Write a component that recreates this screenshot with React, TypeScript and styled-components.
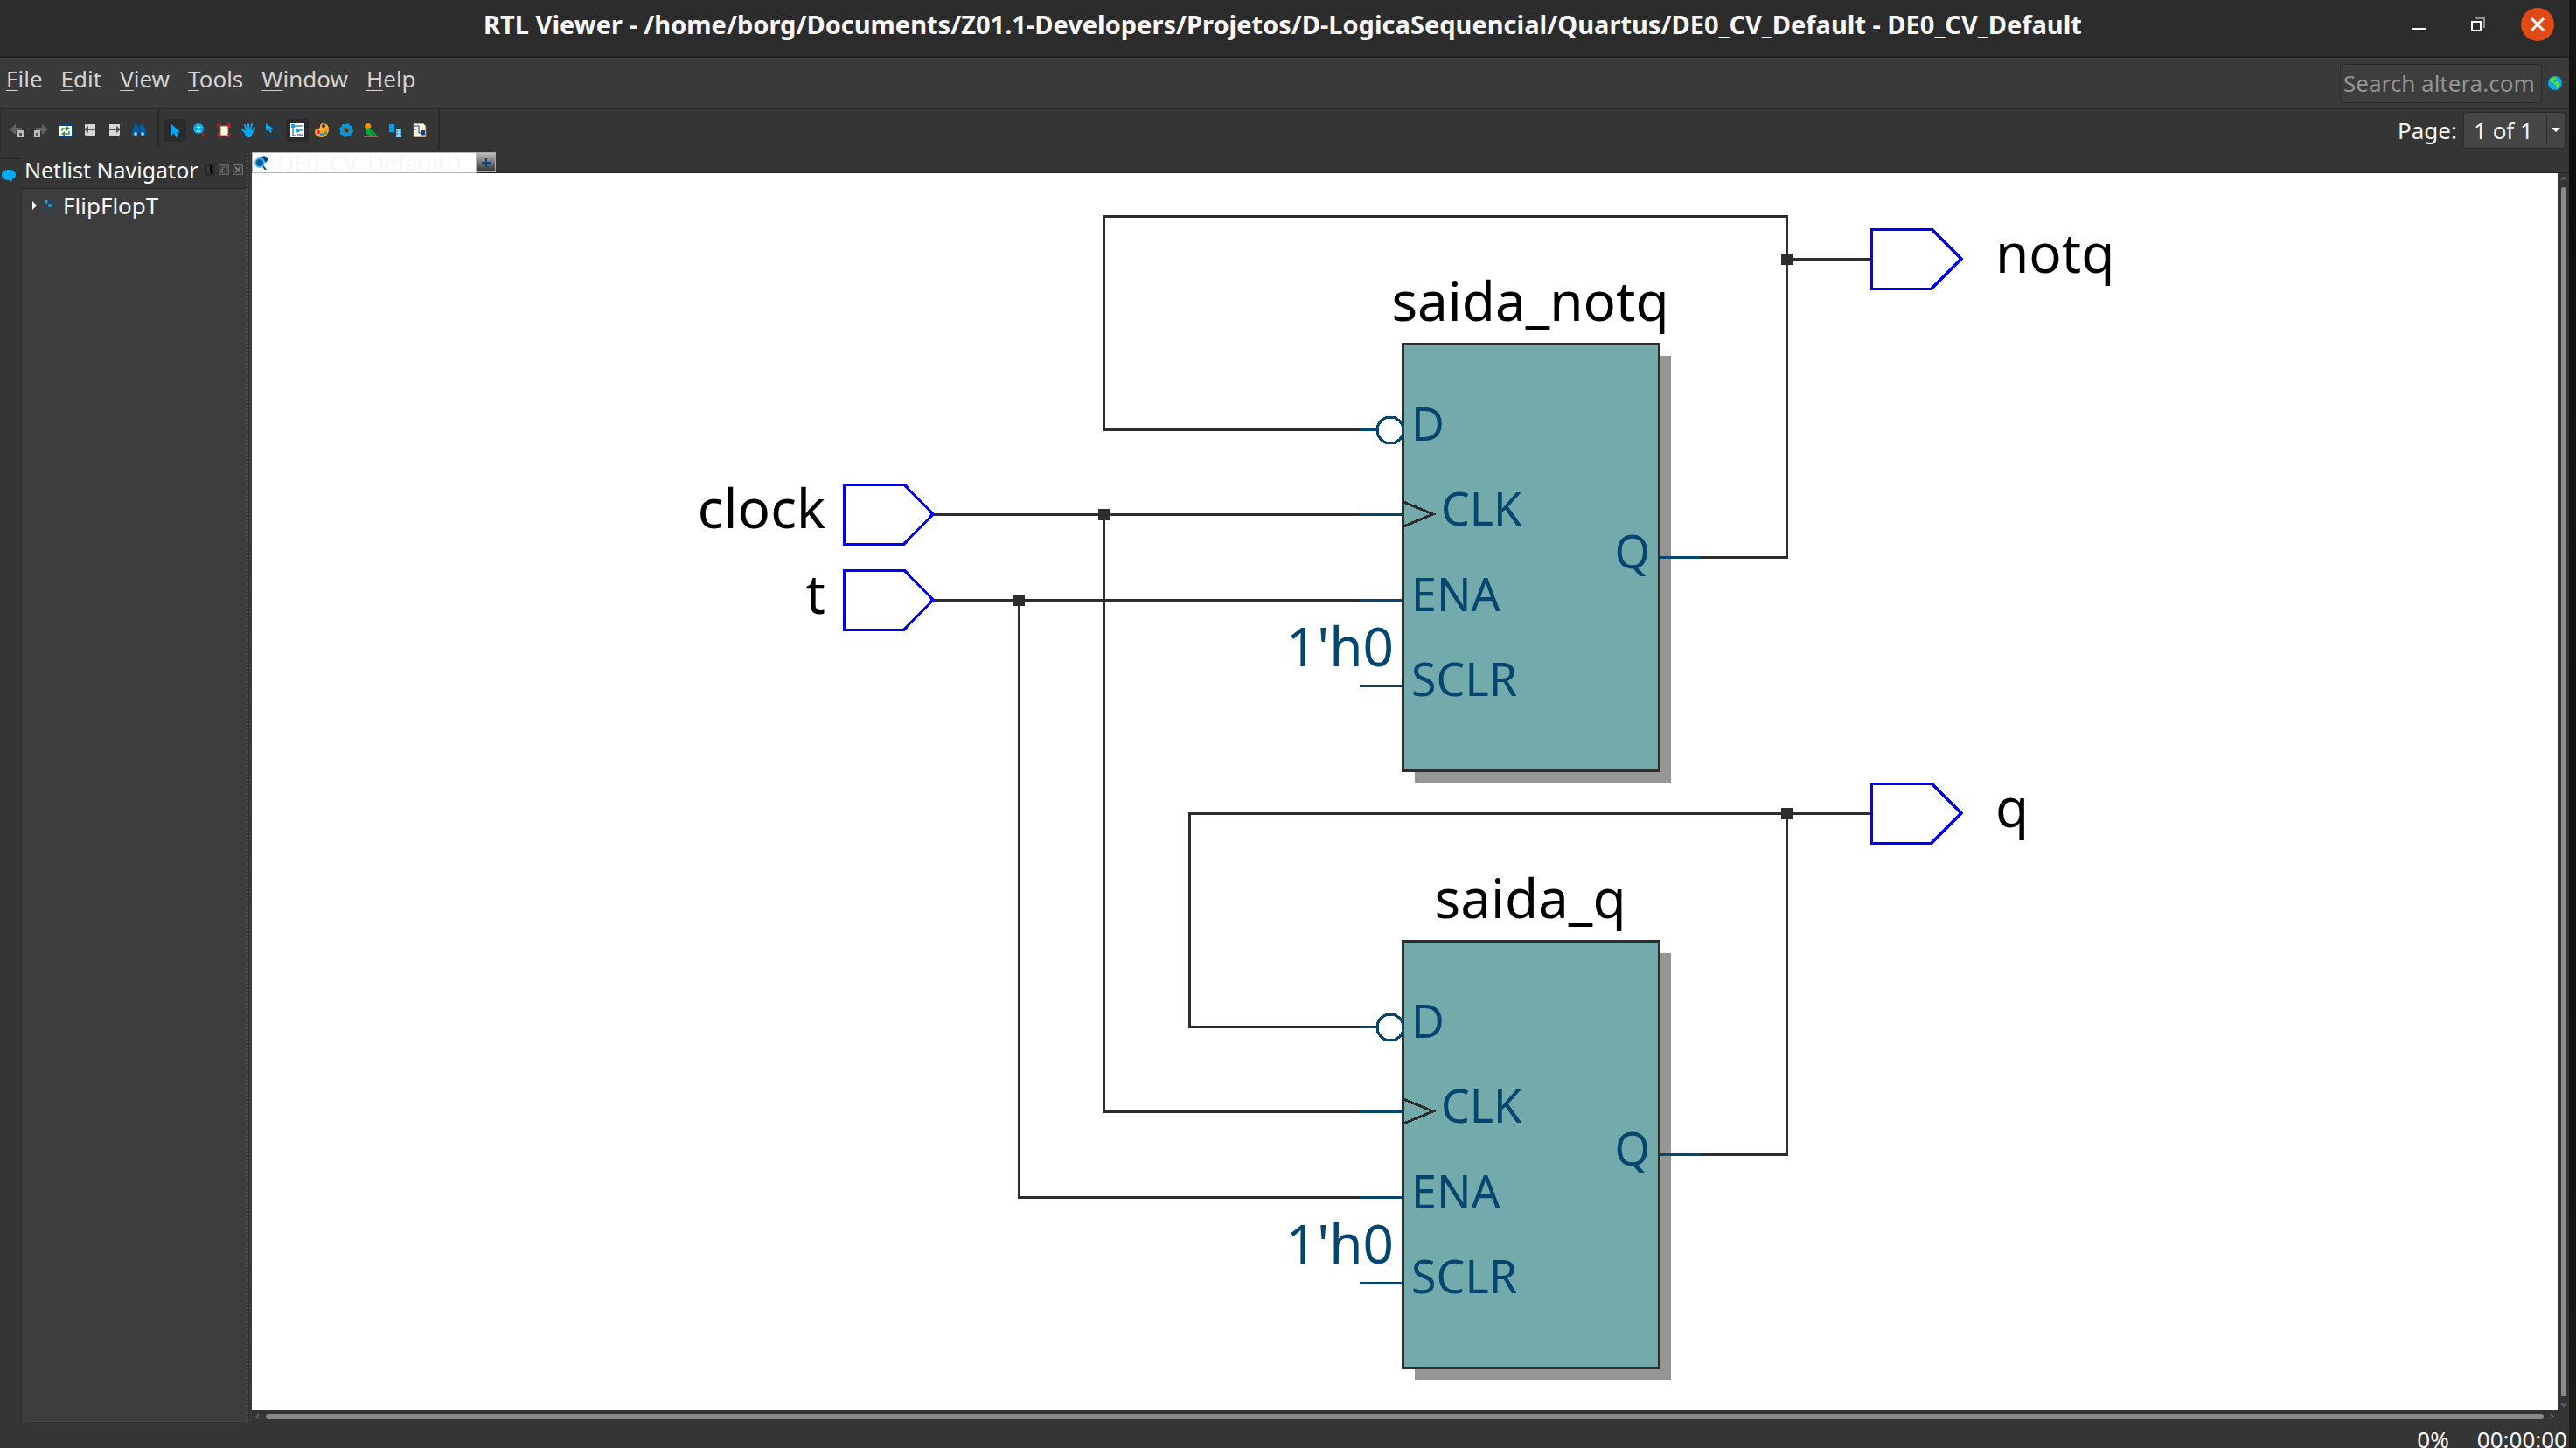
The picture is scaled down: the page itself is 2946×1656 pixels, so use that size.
import React from "react";
import styled, { createGlobalStyle } from "styled-components";

const font = `"Noto Sans", "Open Sans", sans-serif`;
const color = {
  title: "#2c2c2c",
  menu: "#3a3a3a",
  bar: "#353535",
  panel: "#3d3d3d",
  line: "#2a2a2a",
  text: "#f7f7f7",
  soft: "#d2d2d2",
  wire: "#2d2d2d",
  pin: "#04466f",
  port: "#0000ff",
  block: "#73abad",
  shadow: "#969696",
  sky: "#03a9f4",
  navy: "#00468b",
};

const GlobalStyle = createGlobalStyle`
  *, *::before, *::after { box-sizing: border-box; }
  body { margin: 0; background: #111; font: 26px/36px ${font}; color: ${color.text}; }
  button, input, select { font: inherit; color: inherit; }
`;

const Desktop = styled.div`
  display: grid;
  grid-template-columns: minmax(0, 1fr) 8px;
  height: 100vh;
  overflow: hidden;
`;
const DesktopEdge = styled.div`
  background: linear-gradient(#161616, #0d0d0d 12%, #141414 30%, #10120f 55%, #121212 80%, #1c1d19);
`;
const AppWindow = styled.div`
  display: flex;
  flex-direction: column;
  min-width: 0;
  height: 100vh;
  background: ${color.bar};
`;

/* Title bar */
const TitleBar = styled.header`
  display: grid;
  grid-template-columns: 196px 1fr 200px;
  align-items: center;
  flex: none;
  height: 66px;
  padding-bottom: 8px;
  background: ${color.title};
  border-bottom: 2px solid #232323;
`;
const Title = styled.h1`
  margin: 0;
  font-size: 29px;
  line-height: 36px;
  font-weight: 700;
  text-align: center;
  white-space: nowrap;
`;
const WindowButtons = styled.div`
  display: flex;
  justify-content: flex-end;
  gap: 30px;
  padding-right: 17px;
`;
const WindowButton = styled.button<{ $close?: boolean }>`
  display: grid;
  place-items: center;
  flex: none;
  width: 38px;
  height: 38px;
  padding: 0;
  border: 0;
  border-radius: 50%;
  background: ${(p) => (p.$close ? "#df4a16" : "transparent")};
`;

/* Menu bar */
const MenuBar = styled.div`
  display: flex;
  align-items: center;
  justify-content: space-between;
  flex: none;
  height: 59px;
  background: ${color.menu};
  border-bottom: 1px solid ${color.line};
`;
const Menus = styled.nav`
  display: flex;
  gap: 21px;
  padding: 0 0 10px 7px;
`;
const MenuButton = styled.button`
  padding: 0;
  border: 0;
  background: none;
  color: ${color.soft};
  line-height: 36px;
`;
const Mnemonic = styled.span`
  text-decoration: underline;
  text-decoration-thickness: 1px;
  text-underline-offset: 3px;
`;
const SearchForm = styled.form`
  display: flex;
  align-items: center;
  gap: 7px;
  padding-right: 8px;
`;
const SearchInput = styled.input`
  width: 231px;
  height: 45px;
  padding: 0 0 0 3px;
  border: 1px solid ${color.line};
  border-radius: 4px;
  background: ${color.panel};
  &::placeholder { color: #949494; opacity: 1; }
`;
const PlainButton = styled.button`
  display: grid;
  place-items: center;
  padding: 0;
  border: 0;
  background: none;
`;

/* Toolbar */
const ToolBar = styled.div`
  display: flex;
  align-items: center;
  justify-content: space-between;
  flex: none;
  height: 49px;
  padding-bottom: 2px;
  border-left: 1px solid #2b2b2b;
`;
const Tools = styled.div`
  display: flex;
  align-items: center;
`;
const ToolGroup = styled.div`
  display: flex;
  gap: 2px;
  padding: 0 8px 0 5px;
`;
const ToolDivider = styled.span`
  width: 2px;
  height: 45px;
  background: #2b2b2b;
`;
const ToolButton = styled.button<{ $active?: boolean }>`
  display: grid;
  place-items: center;
  width: 26px;
  height: 26px;
  padding: 0;
  border: 0;
  border-radius: 3px;
  background: ${(p) => (p.$active ? "#2a2a2a" : "transparent")};
`;
const Pager = styled.label`
  display: flex;
  align-items: center;
  gap: 7px;
  padding-right: 4px;
`;
const SelectFrame = styled.span`
  display: grid;
  grid-template-columns: 1fr 21px;
  align-items: center;
  width: 117px;
  height: 42px;
  border: 1px solid #2b2b2b;
  border-radius: 4px;
  background: #454545;
`;
const PageSelect = styled.select`
  grid-area: 1 / 1 / 2 / 3;
  height: 40px;
  padding: 0 0 0 11px;
  border: 0;
  background: none;
  appearance: none;
`;
const SelectArrow = styled.span`
  display: grid;
  place-items: center;
  grid-area: 1 / 2 / 2 / 3;
  height: 33px;
  border-left: 1px solid #2b2b2b;
  pointer-events: none;
`;

/* Work area */
const Work = styled.div`
  display: grid;
  grid-template-columns: 24px 258px 6px minmax(0, 1fr);
  flex: 1;
  min-height: 0;
`;
const DockStrip = styled.div`
  padding-top: 5px;
`;
const DockTab = styled.button`
  display: grid;
  place-items: center;
  width: 24px;
  height: 38px;
  padding: 0 4px 0 0;
  border: 0;
  border-top: 3px solid #2b2b2b;
  background: none;
`;
const Dock = styled.aside`
  display: flex;
  flex-direction: column;
  min-width: 0;
`;
const DockHeader = styled.div`
  display: flex;
  align-items: center;
  justify-content: space-between;
  height: 41px;
  padding: 0 4px 2px 4px;
`;
const DockTitle = styled.h2`
  margin: 0;
  font-size: 25px;
  line-height: 36px;
  font-weight: 400;
  white-space: nowrap;
`;
const DockButtons = styled.div`
  display: flex;
  align-items: center;
  gap: 4px;
`;
const DockButton = styled.button<{ $active?: boolean }>`
  display: grid;
  place-items: center;
  width: 12px;
  height: 14px;
  padding: 0;
  border: 0;
  border-radius: 3px;
  background: ${(p) => (p.$active ? "#2a2a2a" : "transparent")};
`;
const Tree = styled.ul`
  flex: 1;
  margin: 0;
  padding: 1px 0 0;
  list-style: none;
  background: ${color.panel};
  border: 1px solid;
  border-color: #262626 #454545 #474747 #2b2b2b;
`;
const TreeItem = styled.li`
  display: flex;
  align-items: center;
  gap: 8px;
  padding-left: 12px;
`;
const Splitter = styled.div`
  margin-bottom: 1px;
  background: radial-gradient(circle, #4d4d4d 1px, transparent 1px) 0 0 / 3px 4px;
`;
const Viewer = styled.main`
  display: grid;
  grid-template-columns: minmax(0, 1fr) 13px;
  grid-template-rows: 24px minmax(0, 1fr) 13px;
  min-width: 0;
`;
const Tabs = styled.div`
  display: flex;
  grid-column: 1 / 3;
  border-bottom: 1px solid #232323;
`;
const Tab = styled.button`
  display: flex;
  align-items: center;
  gap: 10px;
  width: 257px;
  height: 24px;
  padding: 0 2px;
  border: 1px solid #b4b4b4;
  background: #fff;
  color: #f6f6f6;
  line-height: 22px;
  white-space: nowrap;
`;
const AddTab = styled.button`
  display: grid;
  place-items: center;
  width: 22px;
  height: 23px;
  padding: 0;
  border: 1px solid #a8a8a8;
  background: linear-gradient(#bcbcbc, #333);
`;
const Canvas = styled.div`
  display: grid;
  place-items: center;
  overflow: hidden;
  background: #fff;
`;
const ScrollBar = styled.div<{ $vertical?: boolean }>`
  display: flex;
  flex-direction: ${(p) => (p.$vertical ? "column" : "row")};
  align-items: center;
  justify-content: space-between;
  gap: 6px;
  padding: ${(p) => (p.$vertical ? "3px 0" : "0 3px")};
`;
const Thumb = styled.div`
  flex: 1;
  align-self: center;
  min-width: 6px;
  min-height: 6px;
  border-radius: 3px;
  background: #8b8989;
`;

/* Status bar */
const StatusBar = styled.footer`
  display: flex;
  justify-content: flex-end;
  gap: 32px;
  flex: none;
  height: 30px;
  padding-right: 2px;
  line-height: 40px;
`;

/* Schematic */
const Drawing = styled.svg`
  display: block;
  font-family: ${font};
  fill: none;
`;
const Wire = styled.path`
  stroke: ${color.wire};
  stroke-width: 3;
`;
const Stub = styled.path`
  stroke: ${color.pin};
  stroke-width: 3;
`;
const PortShape = styled.path`
  stroke: ${color.port};
  stroke-width: 3;
`;
const NetLabel = styled.text<{ $pin?: boolean }>`
  fill: ${(p) => (p.$pin ? color.pin : "#000")};
  font-size: 62px;
`;
const PinLabel = styled.text`
  fill: ${color.pin};
  font-size: 52px;
`;

const Icon = ({ children, size = 16 }: { children: React.ReactNode; size?: number }) => (
  <svg width={size} height={size} viewBox="0 0 16 16" fill="none" aria-hidden="true">
    {children}
  </svg>
);

const HierarchyLines = ({ line }: { line: string }) => (
  <>
    <path d="M3 5v9h3M5 3h10M10 8h5M8 13h7" stroke={line} />
    <path d="M1 1h4v4H1zM6 6h4v4H6z" fill={color.sky} />
  </>
);

const toolGroups: { label: string; active?: boolean; art: React.ReactNode }[][] = [
  [
    {
      label: "Back",
      art: (
        <>
          <path d="M0 7 7 1v4h7v4H7v4z" fill="#626262" />
          <path d="M9 8h7v8H9z" fill="#bcbcbc" />
          <path d="M11 11h3v3h-3z" fill="#555" />
        </>
      ),
    },
    {
      label: "Forward",
      art: (
        <>
          <path d="M16 7 9 1v4H2v4h7v4z" fill="#626262" />
          <path d="M0 8h7v8H0z" fill="#bcbcbc" />
          <path d="M2 11h3v3H2z" fill="#555" />
        </>
      ),
    },
    {
      label: "Refresh",
      art: (
        <>
          <path d="M0 0h16v16H0z" fill={color.navy} />
          <path d="M1 3h14v12H1z" fill="#fff" />
          <path d="M4 9V6h6M12 9v3H6" stroke="#3f9142" strokeWidth="1.5" />
          <path d="m9 3 4 3-4 3zM7 9l-4 3 4 3z" fill="#3f9142" />
        </>
      ),
    },
    {
      label: "Previous page",
      art: (
        <>
          <path d="M2 1h12v14H4l-2-2z" fill="#d6d6d6" />
          <path d="m1 7 5-4v3h9v2H6v3z" fill="#555" />
        </>
      ),
    },
    {
      label: "Next page",
      art: (
        <>
          <path d="M2 1h12v12l-2 2H2z" fill="#d6d6d6" />
          <path d="m15 7-5-4v3H1v2h9v3z" fill="#555" />
        </>
      ),
    },
    {
      label: "Find",
      art: (
        <>
          <path d="M3 1h3l1 3h2l1-3h3l3 9v4l-2 1h-4l-1-5H7l-1 5H2l-2-1v-4z" fill="#005a9e" />
          <circle cx="4" cy="12" r="2" fill="#7fc8ee" />
          <circle cx="12" cy="12" r="2" fill="#7fc8ee" />
        </>
      ),
    },
  ],
  [
    { label: "Select", active: true, art: <path d="M4 1v13l3-3 2 5 3-1-2-5h4z" fill={color.sky} /> },
    {
      label: "Zoom",
      art: (
        <>
          <path d="m11 11 4 5" stroke="#b71c1c" strokeWidth="2" />
          <circle cx="7" cy="6" r="6" fill={color.sky} />
          <path d="M7 2v5M4.500 4.500h5M4.500 9h5" stroke="#fff" />
        </>
      ),
    },
    {
      label: "Fit in window",
      art: (
        <>
          <path d="M4 3h9v11H4z" fill="#fff6dc" stroke="#8a6b62" />
          <path d="M1 5V1h4M11 1h4v4M15 11v4h-4M5 15H1v-4M1 1l3 3M15 1l-3 3M15 15l-3-3M1 15l3-3" stroke="#f11c1c" />
        </>
      ),
    },
    {
      label: "Pan",
      art: (
        <>
          <path d="M4 8h9l-1 6-2 2H7l-3-3z" fill={color.sky} />
          <path d="M5 11 1 7M6 9 4 2M8 9V1M10 9l2-8M12 11l3-6" stroke={color.sky} strokeWidth="2" strokeLinecap="round" />
        </>
      ),
    },
    {
      label: "Area select",
      art: (
        <>
          <path d="M0 0v9l3-2 2 4 2-1-2-4h3z" fill={color.sky} />
          <path d="M8 4h7v11H2v-4" stroke="#005a9e" strokeDasharray="1 1" />
        </>
      ),
    },
    {
      label: "Netlist navigator",
      active: true,
      art: (
        <>
          <path d="M0 0h16v16H0z" fill="#fff" />
          <HierarchyLines line={color.navy} />
        </>
      ),
    },
    {
      label: "Colors",
      art: (
        <>
          <path d="M9 0c5 0 7 3 7 7s-3 9-8 9-8-3-8-6 2-4 4-4 2-2 2-3 1-3 3-3z" fill="#ffa726" />
          <circle cx="10" cy="3" r="2" fill="#353535" />
          <circle cx="4" cy="10" r="2" fill="#e91e63" />
          <circle cx="8" cy="13" r="2" fill="#039be5" />
          <circle cx="12" cy="11" r="2" fill="#43a047" />
          <circle cx="13" cy="7" r="1" fill="#ab47bc" />
        </>
      ),
    },
    {
      label: "Settings",
      art: (
        <>
          <circle cx="8" cy="8" r="5" stroke="#039be5" strokeWidth="4" />
          <circle cx="8" cy="8" r="7" stroke="#039be5" strokeWidth="2" strokeDasharray="3 2.500" />
          <circle cx="8" cy="8" r="3" stroke="#8a6d3b" />
        </>
      ),
    },
    {
      label: "Bird's eye view",
      art: (
        <>
          <path d="M0 14h16v2H0z" fill="#8d6e63" />
          <path d="M2 5c3-1 5 0 7 2l6 7H7c-4-1-6-4-5-9z" fill="#00a83a" />
          <path d="M1 4c0-3 2-4 4-4s4 2 3 5L3 6z" fill="#fb8c00" />
          <path d="m6 8 7 6" stroke="#1b5e20" />
        </>
      ),
    },
    {
      label: "Swap view",
      art: (
        <>
          <path d="M1 1h6v9H1z" fill="#03a0e8" />
          <path d="M9 6h6v10H9z" fill="#81d0f5" />
          <path d="m9 1 4 3M2 12l5 3" stroke={color.navy} />
          <path d="M9 9h2M9 12h2M13 9h2M13 12h2" stroke="#2b6c96" />
        </>
      ),
    },
    {
      label: "Export schematic",
      art: (
        <>
          <path d="M1 0h11l3 3v13H1z" fill="#fff6dc" stroke="#8a6b62" />
          <path d="M1 3h6v8h4M1 7h3M9 14h5" stroke={color.navy} />
          <path d="M10 8h4v5h-4z" fill={color.navy} />
        </>
      ),
    },
  ],
];

const menus = ["File", "Edit", "View", "Tools", "Window", "Help"];

const Arrow = ({ d }: { d: string }) => (
  <svg width="7" height="7" viewBox="0 0 7 7" fill="none" aria-hidden="true">
    <path d={d} stroke="#5c606b" strokeWidth="2" />
  </svg>
);

const Junction = ({ x, y }: { x: number; y: number }) => (
  <rect x={x - 6} y={y - 6} width="13" height="13" fill={color.wire} />
);

const InputPort = ({ y, name }: { y: number; name: string }) => (
  <g>
    <PortShape d={`M965 ${y - 34}h69l33 34-33 34h-69z`} />
    <NetLabel x="944" y={y + 16} textAnchor="end">{name}</NetLabel>
  </g>
);

const OutputPort = ({ y, name }: { y: number; name: string }) => (
  <g>
    <PortShape d={`M2140 ${y - 34}h69l34 34-34 34h-69z`} />
    <NetLabel x="2282" y={y + 16}>{name}</NetLabel>
  </g>
);

const FlipFlop = ({ y, name }: { y: number; name: string }) => (
  <g transform={`translate(1604 ${y})`}>
    <rect x="14" y="14" width="293" height="488" fill={color.shadow} />
    <rect width="293" height="488" fill={color.block} stroke={color.wire} strokeWidth="3" />
    <Stub d="M-49 98h20M-49 195h48M-49 293h48M-49 391h48M293 244h48" />
    <circle cx="-14" cy="99" r="15" fill="#fff" stroke={color.pin} strokeWidth="3" />
    <Wire d="M1 181 35 195 1 209" />
    <NetLabel x="146" y="-26" textAnchor="middle">{name}</NetLabel>
    <PinLabel x="10" y="111">D</PinLabel>
    <PinLabel x="44" y="208">CLK</PinLabel>
    <PinLabel x="10" y="306">ENA</PinLabel>
    <PinLabel x="10" y="403">SCLR</PinLabel>
    <PinLabel x="283" y="257" textAnchor="end">Q</PinLabel>
    <NetLabel x="-10" y="369" textAnchor="end" $pin>1'h0</NetLabel>
  </g>
);

const Schematic = () => (
  <Drawing width="2637" height="1415" viewBox="288 198 2637 1415" shapeRendering="crispEdges" role="img" aria-label="FlipFlopT netlist">
    <Wire d="M1555 491H1262V247H2043V637H1945M2043 296H2140" />
    <Wire d="M1555 1174H1360V930H2140M2043 930V1320H1945" />
    <Wire d="M1067 588H1555M1262 588V1271H1555" />
    <Wire d="M1067 686H1555M1165 686V1369H1555" />
    <FlipFlop y={393} name="saida_notq" />
    <FlipFlop y={1076} name="saida_q" />
    <InputPort y={588} name="clock" />
    <InputPort y={686} name="t" />
    <OutputPort y={296} name="notq" />
    <OutputPort y={930} name="q" />
    <Junction x={1262} y={588} />
    <Junction x={1165} y={686} />
    <Junction x={2043} y={296} />
    <Junction x={2043} y={930} />
  </Drawing>
);

export default function App() {
  return (
    <Desktop>
      <GlobalStyle />
      <AppWindow>
        <TitleBar>
          <span />
          <Title>
            RTL Viewer - /home/borg/Documents/Z01.1-Developers/Projetos/D-LogicaSequencial/Quartus/DE0_CV_Default - DE0_CV_Default
          </Title>
          <WindowButtons>
            <WindowButton aria-label="Minimize">
              <Icon><path d="M0 13h16" stroke="#fff" strokeWidth="2" /></Icon>
            </WindowButton>
            <WindowButton aria-label="Restore">
              <Icon>
                <path d="M4 1h11v11" stroke="#8c8c8c" strokeWidth="2" />
                <path d="M1 5h10v10H1z" stroke="#fff" strokeWidth="2" />
              </Icon>
            </WindowButton>
            <WindowButton aria-label="Close" $close>
              <Icon><path d="m1 1 14 14M15 1 1 15" stroke="#fff" strokeWidth="3" /></Icon>
            </WindowButton>
          </WindowButtons>
        </TitleBar>

        <MenuBar>
          <Menus>
            {menus.map((name) => (
              <MenuButton key={name}>
                <Mnemonic>{name[0]}</Mnemonic>
                {name.slice(1)}
              </MenuButton>
            ))}
          </Menus>
          <SearchForm>
            <SearchInput type="text" aria-label="Search altera.com" placeholder="Search altera.com" />
            <PlainButton type="button" aria-label="Search the web">
              <Icon>
                <circle cx="8" cy="8" r="8" fill={color.sky} />
                <path d="M4 2l4-1 2 2-3 2-1 3-3-1-1-2zM7 7l4-1 3 3-2 3-2 3-1-4-2-2z" fill="#64dd17" />
              </Icon>
            </PlainButton>
          </SearchForm>
        </MenuBar>

        <ToolBar>
          <Tools>
            {toolGroups.map((group, i) => (
              <React.Fragment key={i}>
                {i > 0 && <ToolDivider />}
                <ToolGroup>
                  {group.map((tool) => (
                    <ToolButton key={tool.label} aria-label={tool.label} $active={tool.active}>
                      <Icon>{tool.art}</Icon>
                    </ToolButton>
                  ))}
                </ToolGroup>
              </React.Fragment>
            ))}
            <ToolDivider />
          </Tools>
          <Pager>
            Page:
            <SelectFrame>
              <PageSelect defaultValue="1">
                <option value="1">1 of 1</option>
              </PageSelect>
              <SelectArrow>
                <svg width="10" height="5" viewBox="0 0 10 5" aria-hidden="true">
                  <path d="M0 0h10L5 5z" fill="#fff" />
                </svg>
              </SelectArrow>
            </SelectFrame>
          </Pager>
        </ToolBar>

        <Work>
          <DockStrip>
            <DockTab aria-label="Messages">
              <Icon>
                <path d="M8 2c5 0 8 2 8 6 0 3-2 4-4 5l-1 3-2-2c-6 0-9-2-9-6s3-6 8-6z" fill={color.sky} />
              </Icon>
            </DockTab>
          </DockStrip>
          <Dock>
            <DockHeader>
              <DockTitle>Netlist Navigator</DockTitle>
              <DockButtons>
                <DockButton aria-label="Pin" $active>
                  <Icon size={10}><path d="M5 1v9M3 10h10M8 10v6" stroke="#47505a" strokeWidth="2" /><path d="M10 0v16" stroke="#000" strokeWidth="3" /></Icon>
                </DockButton>
                <DockButton aria-label="Float">
                  <Icon size={12}><path d="M1 1h14v14H1zM6 4h6v6H6zM4 7v5h5" stroke="#777" strokeWidth="1.500" /></Icon>
                </DockButton>
                <DockButton aria-label="Close panel">
                  <Icon size={12}><path d="M1 1h14v14H1z" stroke="#777" strokeWidth="1.500" /><path d="m4 4 8 8M12 4l-8 8" stroke="#777" strokeWidth="3" /></Icon>
                </DockButton>
              </DockButtons>
            </DockHeader>
            <Tree>
              <TreeItem>
                <svg width="5" height="10" viewBox="0 0 5 10" aria-hidden="true">
                  <path d="M0 0l5 5-5 5z" fill="#fff" />
                </svg>
                <Icon size={14}><HierarchyLines line="#0c4a80" /></Icon>
                <span>FlipFlopT</span>
              </TreeItem>
            </Tree>
          </Dock>
          <Splitter />
          <Viewer>
            <Tabs>
              <Tab>
                <Icon>
                  <path d="m7 2 4-2 5 4-3 4z" fill={color.navy} />
                  <path d="m9 11 4 5" stroke={color.navy} strokeWidth="2" />
                  <circle cx="6" cy="8" r="5" fill="#005a9e" stroke="#4fb8ea" strokeWidth="2" />
                </Icon>
                <span>DE0_CV_Default:1</span>
              </Tab>
              <AddTab aria-label="New tab">
                <Icon><path d="M8 3v10M3 8h10" stroke={color.navy} strokeWidth="2" /></Icon>
              </AddTab>
            </Tabs>
            <Canvas>
              <Schematic />
            </Canvas>
            <ScrollBar $vertical>
              <Arrow d="M1 5l3-3 2 3" />
              <Thumb />
              <Arrow d="M1 2l3 3 2-3" />
            </ScrollBar>
            <ScrollBar>
              <Arrow d="M5 1 2 4l3 2" />
              <Thumb />
              <Arrow d="M2 1l3 3-3 2" />
            </ScrollBar>
          </Viewer>
        </Work>

        <StatusBar>
          <span>0%</span>
          <span>00:00:00</span>
        </StatusBar>
      </AppWindow>
      <DesktopEdge />
    </Desktop>
  );
}
